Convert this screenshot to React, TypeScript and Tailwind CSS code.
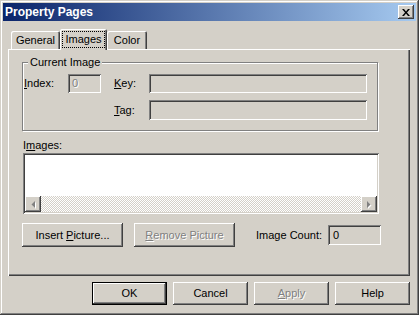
const raised =
  "shadow-[inset_-1px_-1px_#404040,inset_1px_1px_#fff,inset_-2px_-2px_#808080,inset_2px_2px_#d4d0c8]";
const sunken =
  "shadow-[inset_1px_1px_#808080,inset_-1px_-1px_#fff,inset_2px_2px_#404040,inset_-2px_-2px_#d4d0c8]";
const disabledText = "text-[#808080] [text-shadow:1px_1px_0_#fff]";

function Button({
  children,
  width,
  isDefault,
  disabled,
}: {
  children: React.ReactNode;
  width: string;
  isDefault?: boolean;
  disabled?: boolean;
}) {
  return (
    <div
      className={`${width} flex items-center justify-center bg-[#d4d0c8] ${
        isDefault ? "border border-black" : ""
      }`}
    >
      <div className={`flex h-full w-full items-center justify-center ${raised} ${disabled ? disabledText : ""}`}>
        {children}
      </div>
    </div>
  );
}

function Arrow({ dir }: { dir: "left" | "right" }) {
  return (
    <div className={`flex h-[16px] w-[16px] items-center justify-center bg-[#d4d0c8] ${raised}`}>
      <svg width="4" height="7" viewBox="0 0 4 7" className="overflow-visible">
        {dir === "left" ? (
          <>
            <path d="M4 0v7L0.5 3.5z" fill="#fff" transform="translate(1 1)" />
            <path d="M4 0v7L0.5 3.5z" fill="#808080" />
          </>
        ) : (
          <>
            <path d="M0 0v7l3.5-3.5z" fill="#fff" transform="translate(1 1)" />
            <path d="M0 0v7l3.5-3.5z" fill="#808080" />
          </>
        )}
      </svg>
    </div>
  );
}

export default function App() {
  return (
    <div
      className="flex h-[315px] w-[419px] flex-col bg-[#d4d0c8] p-[3px] font-['Liberation_Sans',Arial,sans-serif] text-[11px] leading-[13px] text-black shadow-[inset_-1px_-1px_#404040,inset_1px_1px_#d4d0c8,inset_-2px_-2px_#808080,inset_2px_2px_#fff]"
    >
      {/* title bar */}
      <div className="flex h-[18px] items-center bg-[linear-gradient(90deg,#0a246a,#a6caf0)] pl-[2px] pr-[2px]">
        <span className="text-[12px] font-bold text-white">Property Pages</span>
        <div className={`ml-auto flex h-[14px] w-[16px] items-center justify-center bg-[#d4d0c8] ${raised}`}>
          <svg width="8" height="7" viewBox="0 0 8 7">
            <path d="M0 0h2l2 2.5L6 0h2L5 3.5 8 7H6L4 4.5 2 7H0l3-3.5z" fill="#000" />
          </svg>
        </div>
      </div>

      <div className="flex flex-col pl-[5px] pr-[6px]">
        {/* tabs */}
        <div className="mt-[8px] flex h-[20px] items-end">
          <div className="ml-[3px] flex h-[18px] w-[49px] items-center justify-center rounded-t-[2px] shadow-[inset_1px_1px_#fff,inset_-1px_0_#404040,inset_-2px_0_#808080]">
            General
          </div>
          <div className="relative z-10 -mb-px flex h-[21px] w-[47px] items-start justify-center rounded-t-[2px] bg-[#d4d0c8] pt-[2px] shadow-[inset_1px_1px_#fff,inset_-1px_0_#404040,inset_-2px_0_#808080]">
            <span className="border border-dotted border-black px-[2px] py-px">Images</span>
          </div>
          <div className="flex h-[18px] w-[40px] items-center justify-center rounded-t-[2px] shadow-[inset_1px_1px_#fff,inset_-1px_0_#404040,inset_-2px_0_#808080]">
            Color
          </div>
        </div>

        {/* tab panel */}
        <div className="flex h-[227px] flex-col px-[14px] pt-[13px] shadow-[inset_1px_1px_#fff,inset_-1px_-1px_#404040,inset_-2px_-2px_#808080]">
          <div className="relative h-[69px] w-[356px] border border-[#808080] pl-[1px] pt-[11px] shadow-[1px_1px_#fff,inset_1px_1px_#fff]">
            <span className="absolute -top-[7px] left-[5px] bg-[#d4d0c8] px-[2px]">Current Image</span>
            <div className="flex h-[19px] items-center">
              <span className="w-[44px]">
                <u>I</u>ndex:
              </span>
              <div className={`flex h-[19px] w-[33px] items-center pl-[4px] ${sunken} ${disabledText}`}>0</div>
              <span className="ml-[13px] w-[35px]">
                <u>K</u>ey:
              </span>
              <div className={`h-[19px] w-[218px] ${sunken}`} />
            </div>
            <div className="mt-[7px] flex h-[20px] items-center pl-[90px]">
              <span className="w-[35px]">
                <u>T</u>ag:
              </span>
              <div className={`h-[20px] w-[218px] ${sunken}`} />
            </div>
          </div>

          <span className="mt-[8px] pl-px">
            I<u>m</u>ages:
          </span>
          <div className={`ml-px mt-px flex h-[61px] w-[356px] flex-col bg-white p-[2px] ${sunken}`}>
            <div className="flex-1" />
            <div className="flex h-[16px]">
              <Arrow dir="left" />
              <div className="flex-1 bg-[image:repeating-conic-gradient(#fff_0_25%,#d4d0c8_0_50%)] bg-[length:2px_2px]" />
              <Arrow dir="right" />
            </div>
          </div>

          <div className="mt-[9px] flex h-[24px] items-center">
            <Button width="w-[101px] h-[24px]">
              <span>
                Insert <u>P</u>icture...
              </span>
            </Button>
            <div className="ml-[11px]">
              <Button width="w-[101px] h-[24px]" disabled>
                <span>
                  <u>R</u>emove Picture
                </span>
              </Button>
            </div>
            <span className="ml-[21px] w-[72px]">Image Count:</span>
            <div className={`flex h-[20px] w-[53px] items-center pl-[5px] ${sunken}`}>0</div>
          </div>
        </div>

        {/* dialog buttons */}
        <div className="mt-[6px] flex justify-end gap-[6px]">
          <Button width="w-[75px] h-[23px]" isDefault>
            OK
          </Button>
          <Button width="w-[75px] h-[23px]">Cancel</Button>
          <Button width="w-[75px] h-[23px]" disabled>
            <span>
              <u>A</u>pply
            </span>
          </Button>
          <Button width="w-[75px] h-[23px]">Help</Button>
        </div>
      </div>
    </div>
  );
}
